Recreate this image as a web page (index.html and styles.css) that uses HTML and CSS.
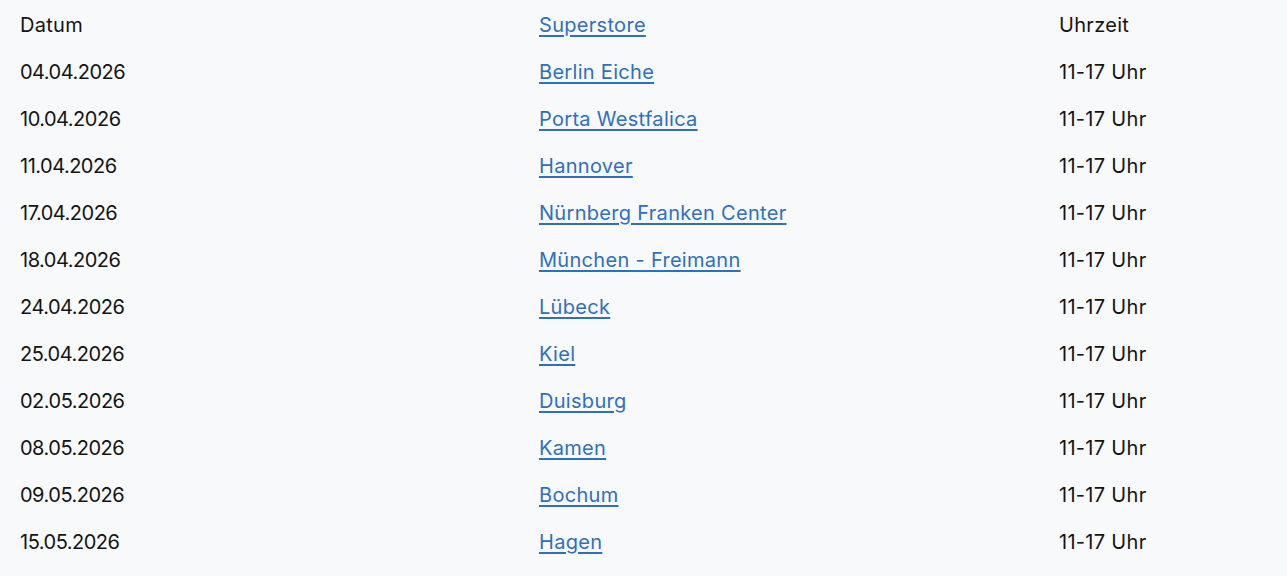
FILE: index.html
```html
<!DOCTYPE html>
<html lang="de">
<head>
<meta charset="utf-8">
<title>Termine</title>
<link rel="stylesheet" href="styles.css">
</head>
<body>
<table class="dates">
  <colgroup><col class="c1"><col class="c2"><col class="c3"></colgroup>
  <thead>
    <tr><th>Datum</th><th><a href="#">Superstore</a></th><th>Uhrzeit</th></tr>
  </thead>
  <tbody>
    <tr><td class="date">04.04.2026</td><td><a href="#">Berlin Eiche</a></td><td>11-17 Uhr</td></tr>
    <tr><td class="date">10.04.2026</td><td><a href="#">Porta Westfalica</a></td><td>11-17 Uhr</td></tr>
    <tr><td class="date">11.04.2026</td><td><a href="#">Hannover</a></td><td>11-17 Uhr</td></tr>
    <tr><td class="date">17.04.2026</td><td><a href="#">Nürnberg Franken Center</a></td><td>11-17 Uhr</td></tr>
    <tr><td class="date">18.04.2026</td><td><a href="#">München - Freimann</a></td><td>11-17 Uhr</td></tr>
    <tr><td class="date">24.04.2026</td><td><a href="#">Lübeck</a></td><td>11-17 Uhr</td></tr>
    <tr><td class="date">25.04.2026</td><td><a href="#">Kiel</a></td><td>11-17 Uhr</td></tr>
    <tr><td class="date">02.05.2026</td><td><a href="#">Duisburg</a></td><td>11-17 Uhr</td></tr>
    <tr><td class="date">08.05.2026</td><td><a href="#">Kamen</a></td><td>11-17 Uhr</td></tr>
    <tr><td class="date">09.05.2026</td><td><a href="#">Bochum</a></td><td>11-17 Uhr</td></tr>
    <tr><td class="date">15.05.2026</td><td><a href="#">Hagen</a></td><td>11-17 Uhr</td></tr>
  </tbody>
</table>
</body>
</html>
```
FILE: styles.css
```css
html, body {
  margin: 0;
  padding: 0;
  background: #f7f9fa;
}
body {
  font-family: Inter, "Noto Sans", sans-serif;
  font-size: 20px;
  color: #141414;
}
.dates {
  border-collapse: collapse;
  table-layout: fixed;
  width: 100%;
}
.c1 { width: 519px; }
.c2 { width: 520px; }
.dates th,
.dates td {
  text-align: left;
  font-weight: 400;
  height: 47px;
  padding: 2px 0 0 20px;
  box-sizing: border-box;
  vertical-align: middle;
  letter-spacing: 0.3px;
}
.dates .date {
  letter-spacing: -0.5px;
}
.dates a {
  color: #2f6fbf;
  text-decoration: underline;
  text-decoration-thickness: 2px;
  text-underline-offset: 3px;
}
```
